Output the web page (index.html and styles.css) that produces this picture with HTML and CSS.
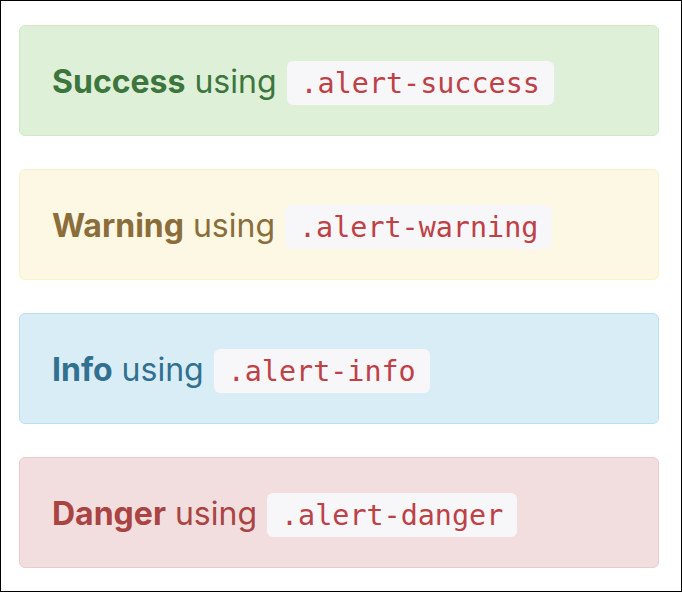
FILE: index.html
```html
<!DOCTYPE html>
<html>
<head>
<meta charset="utf-8">
<link rel="stylesheet" href="styles.css">
</head>
<body>
<div class="frame">
  <div class="alert alert-success"><strong>Success</strong> using <code>.alert-success</code></div>
  <div class="alert alert-warning"><strong>Warning</strong> using <code>.alert-warning</code></div>
  <div class="alert alert-info"><strong>Info</strong> using <code>.alert-info</code></div>
  <div class="alert alert-danger"><strong>Danger</strong> using <code>.alert-danger</code></div>
</div>
</body>
</html>
```
FILE: styles.css
```css
html, body {
  margin: 0;
  padding: 0;
  background: #fff;
}
.frame {
  width: 682px;
  height: 592px;
  box-sizing: border-box;
  border: 1px solid #000;
  padding: 24px 22px 0 18px;
  font-family: Inter, "Liberation Sans", sans-serif;
  font-size: 32px;
}
.alert {
  box-sizing: border-box;
  height: 111px;
  padding: 3px 32px 0;
  line-height: 106px;
  border: 1px solid transparent;
  border-radius: 6px;
  margin-bottom: 33px;
  white-space: nowrap;
}
.alert strong {
  font-weight: 700;
}
.alert code {
  font-family: "DejaVu Sans Mono", "Liberation Mono", monospace;
  font-size: 28.4px;
  line-height: 1;
  color: #bd4147;
  background: #f7f6f9;
  border-radius: 6px;
  padding: 6px 14px 5px;
  margin-left: 1px;
}
.alert-success {
  background: #dff0d8;
  border-color: #d0e9c6;
  color: #3c763d;
}
.alert-warning {
  background: #fcf8e3;
  border-color: #faf2cc;
  color: #8a6d3b;
}
.alert-info {
  background: #d9edf7;
  border-color: #bcdff1;
  color: #31708f;
}
.alert-danger {
  background: #f2dede;
  border-color: #ebcccc;
  color: #a94442;
}
```
